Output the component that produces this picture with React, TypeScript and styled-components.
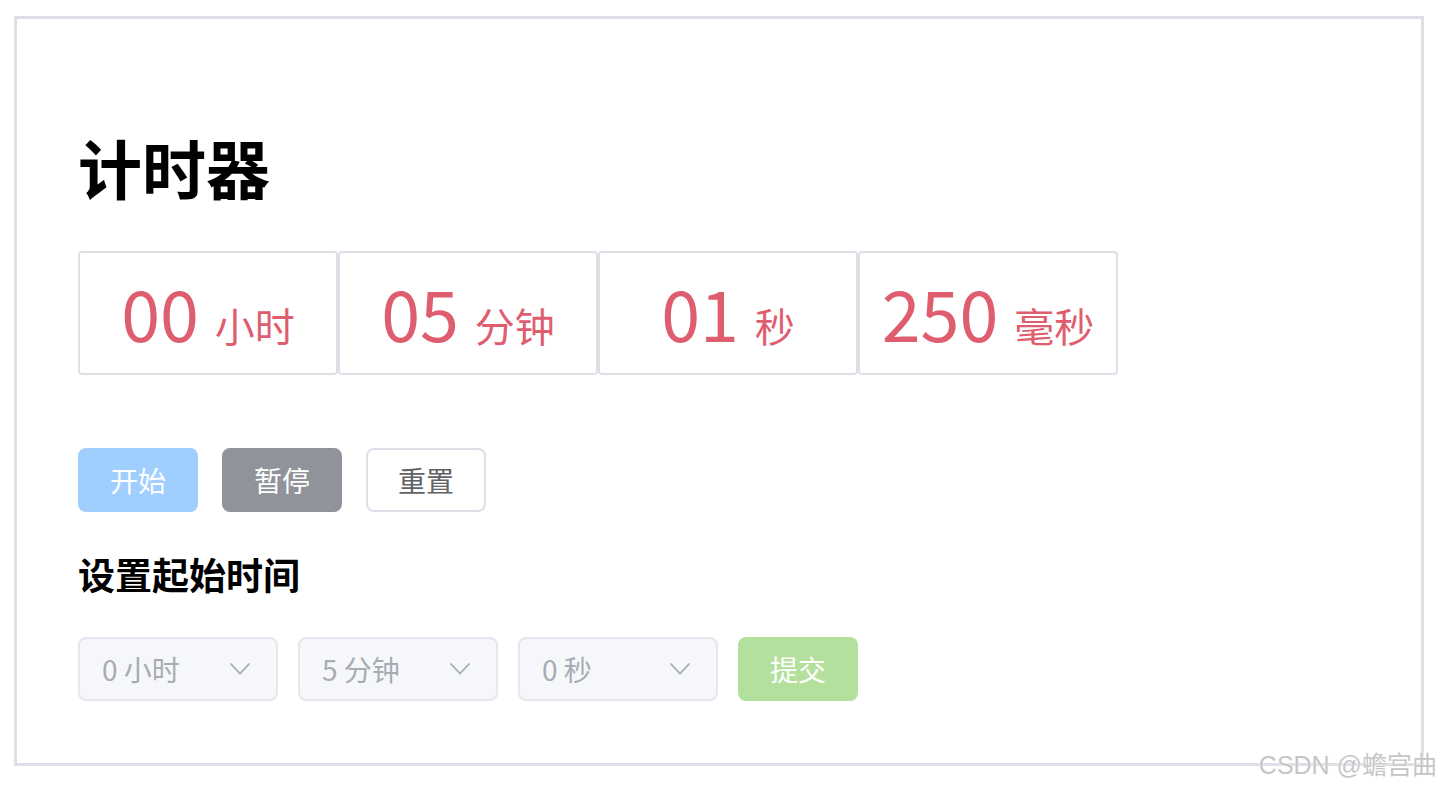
import { FC } from "react";
import styled, { createGlobalStyle } from "styled-components";

const GlobalStyle = createGlobalStyle`
  html, body {
    margin: 0;
    padding: 0;
    background: #ffffff;
  }
  body {
    font-family: "Noto Sans CJK SC", "Noto Sans", sans-serif;
    position: relative;
    min-height: 790px;
  }
`;

const Frame = styled.div`
  box-sizing: border-box;
  margin: 16px 0 0 14px;
  width: 1410px;
  height: 750px;
  border: 3px solid #dcdfe6;
  padding: 115px 0 0 61px;
`;

const Title = styled.h1`
  margin: 0;
  font-size: 64px;
  line-height: 64px;
  font-weight: 700;
  color: #000;
`;

const TimerRow = styled.div`
  display: flex;
  margin-top: 53px;
`;

const TimeCell = styled.div`
  box-sizing: border-box;
  width: 260px;
  height: 124px;
  border: 2px solid #dcdfe6;
  border-radius: 4px;
  display: flex;
  align-items: baseline;
  justify-content: center;
  padding-top: 19px;
  color: #de5e6f;
`;

const Num = styled.span`
  font-size: 70px;
  line-height: 80px;
`;

const Unit = styled.span`
  font-size: 40px;
  margin-left: 16px;
`;

const ButtonRow = styled.div`
  display: flex;
  gap: 24px;
  margin-top: 73px;
`;

const Button = styled.button<{ $bg: string; $fg: string; $border?: string }>`
  box-sizing: border-box;
  width: 120px;
  height: 64px;
  border-radius: 8px;
  border: 2px solid ${(p) => p.$border || p.$bg};
  background: ${(p) => p.$bg};
  color: ${(p) => p.$fg};
  font-family: "Noto Sans CJK SC", sans-serif;
  font-size: 28px;
  padding: 0;
  display: flex;
  align-items: center;
  justify-content: center;
`;

const SubTitle = styled.h3`
  margin: 44px 0 0;
  font-size: 37px;
  line-height: 37px;
  font-weight: 700;
  color: #000;
`;

const FormRow = styled.div`
  display: flex;
  gap: 20px;
  margin-top: 44px;
`;

const Select = styled.div`
  box-sizing: border-box;
  width: 200px;
  height: 64px;
  border: 2px solid #e4e7ed;
  border-radius: 8px;
  background: #f5f7fa;
  display: flex;
  align-items: center;
  justify-content: space-between;
  padding: 0 25px 0 22px;
  color: #a8abb2;
  font-size: 28px;
`;

const Watermark = styled.div`
  position: absolute;
  right: 5px;
  top: 745px;
  font-family: "Liberation Sans", "Noto Sans CJK SC", sans-serif;
  font-size: 25px;
  color: #c6c6c6;
  text-shadow: 0 0 2px #fff, 0 0 1px #fff;
`;

const Chevron: FC = () => (
  <svg width="22" height="14" viewBox="0 0 22 14" fill="none">
    <path d="M1.5 1.5 L11 11.5 L20.5 1.5" stroke="#a8abb2" strokeWidth="1.8" />
  </svg>
);

const cells = [
  ["00", "小时"],
  ["05", "分钟"],
  ["01", "秒"],
  ["250", "毫秒"],
];

const selects = ["0 小时", "5 分钟", "0 秒"];

const App: FC = () => {
  return (
    <>
      <GlobalStyle />
      <Frame>
        <Title>计时器</Title>
        <TimerRow>
          {cells.map(([n, u]) => (
            <TimeCell key={u}>
              <Num>{n}</Num>
              <Unit>{u}</Unit>
            </TimeCell>
          ))}
        </TimerRow>
        <ButtonRow>
          <Button $bg="#a0cfff" $fg="#ffffff">开始</Button>
          <Button $bg="#909399" $fg="#ffffff">暂停</Button>
          <Button $bg="#ffffff" $fg="#606266" $border="#dcdfe6">重置</Button>
        </ButtonRow>
        <SubTitle>设置起始时间</SubTitle>
        <FormRow>
          {selects.map((s) => (
            <Select key={s}>
              <span>{s}</span>
              <Chevron />
            </Select>
          ))}
          <Button $bg="#b3e19d" $fg="#ffffff">提交</Button>
        </FormRow>
      </Frame>
      <Watermark>CSDN @蟾宫曲</Watermark>
    </>
  );
};

export default App;
